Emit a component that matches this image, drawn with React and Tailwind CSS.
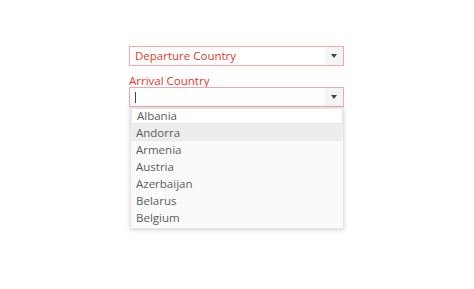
import React from "react";

const countries = ["Albania", "Andorra", "Armenia", "Austria", "Azerbaijan", "Belarus", "Belgium"];

function Arrow() {
  return (
    <div className="flex w-[18px] self-stretch items-center justify-center bg-[#f4f4f4]">
      <svg width="6" height="4" viewBox="0 0 6 4">
        <path d="M0 0 L6 0 L3 4 Z" fill="#444" />
      </svg>
    </div>
  );
}

export default function App() {
  return (
    <div className="w-[474px] h-[289px] bg-white" style={{ fontFamily: '"Open Sans", "Liberation Sans", sans-serif' }}>
      <div className="pt-[46px] pl-[129px]">
        <div className="w-[215px] flex flex-col">
          <div className="h-[20px] flex items-center border border-[#f2a9a4] bg-white">
            <span className="flex-1 pl-[5px] text-[11.5px] text-[#e5372a] leading-none">Departure Country</span>
            <Arrow />
          </div>
          <div className="mt-[8px] text-[11.5px] leading-[13px] text-[#e5372a]">Arrival Country</div>
          <div className="relative">
            <div className="h-[20px] flex items-center border border-[#f2a9a4] bg-white">
              <span className="flex-1 pl-[5px] flex items-center">
                <span className="w-px h-[11px] bg-[#444]"></span>
              </span>
              <Arrow />
            </div>
            <div className="absolute left-[1px] top-[20px] w-[214px] pb-[2px] bg-[#fafafa] shadow-[0_1px_4px_rgba(0,0,0,0.18)] border border-[#e6e6e6]">
              {countries.map((c, i) => (
                <div
                  key={c}
                  className={
                    "pl-[5px] flex items-center text-[11.5px] text-[#5c5c5c] " +
                    (i === 0 ? "bg-white border border-[#e6e6e6] h-[16px] pl-[4px]" : i === 1 ? "bg-[#ededed] h-[17px]" : "h-[17px]")
                  }
                >
                  {c}
                </div>
              ))}
            </div>
          </div>
        </div>
      </div>
    </div>
  );
}
